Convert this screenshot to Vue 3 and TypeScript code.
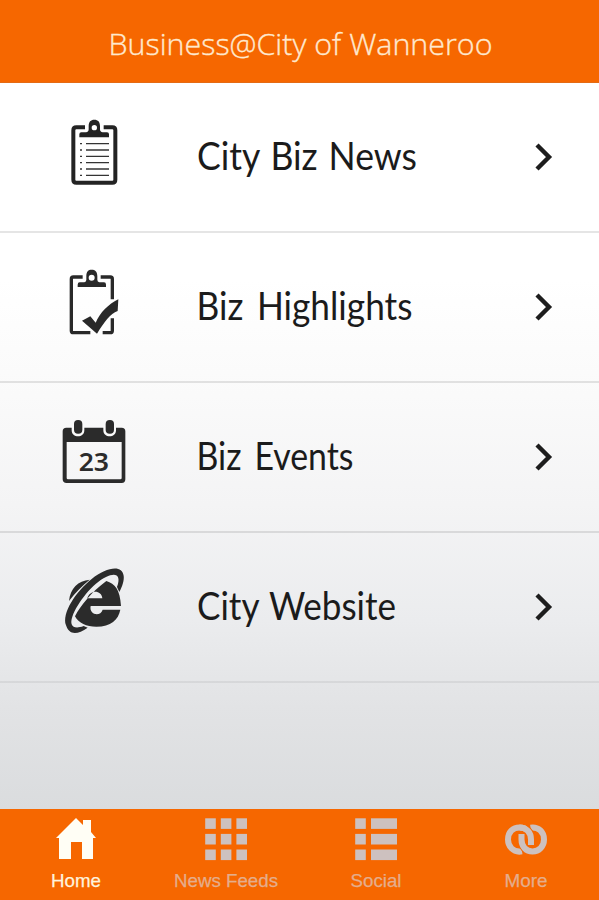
<script setup lang="ts">
interface MenuRow {
  label: string
  icon: 'news' | 'highlights' | 'events' | 'website'
  start: number
  width: number
  gap: number
}

interface Tab {
  label: string
  icon: 'home' | 'grid' | 'list' | 'links'
  width: number
}

const rows: MenuRow[] = [
  { label: 'City Biz News', icon: 'news', start: 7, width: 220, gap: 2 },
  { label: 'Biz Highlights', icon: 'highlights', start: 6.5, width: 216, gap: 5 },
  { label: 'Biz Events', icon: 'events', start: 6.5, width: 157, gap: 5 },
  { label: 'City Website', icon: 'website', start: 7, width: 199, gap: 2 },
]

const tabs: Tab[] = [
  { label: 'Home', icon: 'home', width: 50 },
  { label: 'News Feeds', icon: 'grid', width: 104 },
  { label: 'Social', icon: 'list', width: 51 },
  { label: 'More', icon: 'links', width: 43 },
]

const steps = [0, 1, 2]
const lines = [0, 1, 2, 3, 4, 5]
</script>

<template>
  <div class="screen">
    <header class="header">
      <svg class="title" width="400" height="83" viewBox="0 0 400 83">
        <text x="8.5" y="54.5" textLength="384" lengthAdjust="spacingAndGlyphs">Business@City of Wanneroo</text>
      </svg>
    </header>

    <main class="menu">
      <div v-for="row in rows" :key="row.label" class="row">
        <svg v-if="row.icon === 'news'" class="icon" viewBox="0 0 270 270">
          <path d="M105 67H79Q70 67 70 76V224Q70 233 79 233H187Q196 233 196 224V76Q196 67 187 67H161" fill="none" stroke="#232323" stroke-width="12" />
          <path fill-rule="evenodd" d="M88 97V88Q88 82 94 82H108Q116 81 116 73V64C116 50 122 44 133 44S150 50 150 64V73Q150 81 158 82H171Q177 82 177 88V97ZM133 60A8 8 0 1 0 133 76A8 8 0 1 0 133 60Z" fill="#232323" />
          <g v-for="n in lines" :key="n" stroke="#343434" stroke-width="4">
            <path :d="`M90 ${116 + n * 19}H96M108 ${116 + n * 19}H177`" />
          </g>
        </svg>
        <svg v-else-if="row.icon === 'highlights'" class="icon" viewBox="0 0 270 270">
          <path d="M98 66H70Q64 66 64 72V227Q64 233 70 233H121M152 66H181Q187 66 187 72V133M187 190V227Q187 233 181 233H158" fill="none" stroke="#292929" stroke-width="10" />
          <path fill-rule="evenodd" d="M83 96V89Q83 82 89 82H103Q109 81 109 74V63C109 49 115 44 125 44S142 49 142 63V74Q142 81 148 82H162Q168 82 168 89V96ZM125 59A9 9 0 1 0 125 77A9 9 0 1 0 125 59Z" fill="#292929" />
          <path d="M96 197L121 184L137 203C150 173 175 148 205 133L203 168C181 176 162 202 141 236Z" fill="#292929" />
        </svg>
        <svg v-else-if="row.icon === 'events'" class="icon" viewBox="0 0 270 270">
          <path d="M49 68H215Q226 68 226 79V223Q226 234 215 234H50Q38 234 38 223V79Q38 68 49 68ZM50 111V219Q50 223 54 223H211Q215 223 215 219V111Z" fill="#2b2b2b" fill-rule="evenodd" />
          <path d="M65 62V76C65 100 103 100 103 76V62ZM160 62V76C160 100 198 100 198 76V62Z" fill="#fafafa" />
          <rect x="72" y="45" width="25" height="41" rx="12" fill="#2b2b2b" />
          <rect x="167" y="45" width="25" height="41" rx="12" fill="#2b2b2b" />
          <text class="day" x="86" y="199" textLength="91" lengthAdjust="spacingAndGlyphs">23</text>
        </svg>
        <svg v-else class="icon" viewBox="0 0 270 270">
          <path d="M57 138C61 100 84 77 119 74C98 91 77 111 57 138Z" fill="#2b2b2b" />
          <path fill-rule="evenodd" d="M75 184C92 151 125 111 169 78C195 86 210 104 213 153H122C116 179 151 187 158 164H211C205 194 183 215 139 215C109 215 86 205 75 184ZM112 130H157C155 104 119 103 112 130Z" fill="#2b2b2b" />
          <path fill-rule="evenodd" d="M48 211C35 175 77 110 125 72C169 37 216 28 221 62C223 76 217 94 208 111L201 96C214 62 199 50 168 66C129 84 82 143 67 185C58 211 69 225 101 213L113 218C83 239 58 242 48 211Z" fill="#2b2b2b" />
        </svg>
        <svg class="label" width="300" height="80" viewBox="0 0 300 80">
          <text :x="row.start" y="49.7" :word-spacing="row.gap" :textLength="row.width" lengthAdjust="spacingAndGlyphs">{{ row.label }}</text>
        </svg>
        <svg class="chevron" viewBox="0 0 20 30">
          <path d="M3 3L15 15L3 27" fill="none" stroke="#1d1d1d" stroke-width="4.4" />
        </svg>
      </div>
    </main>

    <nav class="tabs">
      <div v-for="(tab, i) in tabs" :key="tab.label" class="tab" :class="{ active: i === 0 }">
        <svg class="tab-icon" viewBox="0 0 44 44">
          <path v-if="tab.icon === 'home'" d="M22 1L29 8V3H37V15L42 21H39V42H28V25H17V42H5V21H2Z" fill="currentColor" />
          <template v-else-if="tab.icon === 'grid'">
            <template v-for="r in steps" :key="r">
              <rect v-for="c in steps" :key="c" :x="1.2 + c * 15.6" :y="1.3 + r * 15.6" width="10.6" height="10.6" fill="currentColor" />
            </template>
          </template>
          <template v-else-if="tab.icon === 'list'">
            <template v-for="r in steps" :key="r">
              <rect x="1.2" :y="1.3 + r * 15.6" width="10.6" height="10.6" fill="currentColor" />
              <rect x="17" :y="1.3 + r * 15.6" width="26" height="10.6" fill="currentColor" />
            </template>
          </template>
          <g v-else fill="none">
            <path d="M18 34.4C8.5 36 4 28.5 4 22.5C4 15 9 10.5 15.5 10.5C22.5 10.5 27 15.5 27 22.5V28" stroke="currentColor" stroke-width="6" />
            <path d="M17.5 16.5V22.5C17.5 29.5 22 34.5 28.5 34.5C35 34.5 40 29.5 40 22.5C40 15 34.5 9.5 26.5 10.6" stroke="#f66700" stroke-width="8" />
            <path d="M17.5 17V22.5C17.5 29.5 22 34.5 28.5 34.5C35 34.5 40 29.5 40 22.5C40 15 34.5 9.5 26.5 10.6" stroke="currentColor" stroke-width="6" />
            <path d="M21.5 12C25 14 27 18 27 22.5V27" stroke="#f66700" stroke-width="8" />
            <path d="M15.5 10.5C22.5 10.5 27 15.5 27 22.5V28" stroke="currentColor" stroke-width="6" />
          </g>
        </svg>
        <svg class="tab-label" width="120" height="28" viewBox="0 0 120 28">
          <text x="60" y="21" text-anchor="middle" :textLength="tab.width" lengthAdjust="spacingAndGlyphs">{{ tab.label }}</text>
        </svg>
      </div>
    </nav>
  </div>
</template>

<style>
body {
  margin: 0;
}
</style>

<style scoped>
.screen {
  width: 599px;
  height: 900px;
  display: flex;
  flex-direction: column;
  overflow: hidden;
  font-family: "Liberation Sans", sans-serif;
}

.header {
  height: 83px;
  box-sizing: border-box;
  flex: none;
  display: flex;
  justify-content: center;
  background: #f66700;
  border-bottom: 1px solid #e46b14;
}

.title {
  flex: none;
  fill: #ffe9cf;
  stroke: #ffe9cf;
  stroke-width: 0.35px;
  font-family: "Open Sans", sans-serif;
  font-size: 30px;
  font-weight: 300;
}

.menu {
  flex: 1;
  background: linear-gradient(#fff 0, #fff 27%, #fafafa 43%, #f4f4f5 58%, #ebecee 74%, #e2e3e5 86%, #dadcde 100%);
}

.row {
  height: 150px;
  box-sizing: border-box;
  display: flex;
  align-items: flex-start;
  padding: 22px 0 0 50px;
  border-bottom: 2px solid rgb(0 0 0 / 10%);
}

.row:last-child {
  border-bottom-color: rgb(0 0 0 / 6%);
}

.icon {
  width: 90px;
  height: 90px;
  flex: none;
}

.day {
  font-family: "Noto Sans", sans-serif;
  font-size: 76px;
  font-weight: 600;
  fill: #2b2b2b;
}

.label {
  flex: none;
  margin: 15px 0 0 50px;
  fill: #1b1b1b;
  font-family: Lato, sans-serif;
  font-size: 39px;
}

.chevron {
  width: 20px;
  height: 30px;
  margin: 37px 0 0 44px;
}

.tabs {
  height: 91px;
  flex: none;
  display: grid;
  grid-template-columns: repeat(4, 150px);
  background: #f66700;
}

.tab {
  display: flex;
  flex-direction: column;
  align-items: center;
  padding: 8px 0 0 2px;
  color: #cdc1bf;
}

.tab-icon {
  width: 44px;
  height: 44px;
}

.tab-label {
  margin-top: 5px;
  fill: #e5ad8c;
  stroke: #e5ad8c;
  stroke-width: 0.25px;
  font-size: 18.5px;
}

.active {
  color: #fffef5;
}

.active .tab-label {
  fill: #fff3dd;
  stroke: #fff3dd;
}
</style>
